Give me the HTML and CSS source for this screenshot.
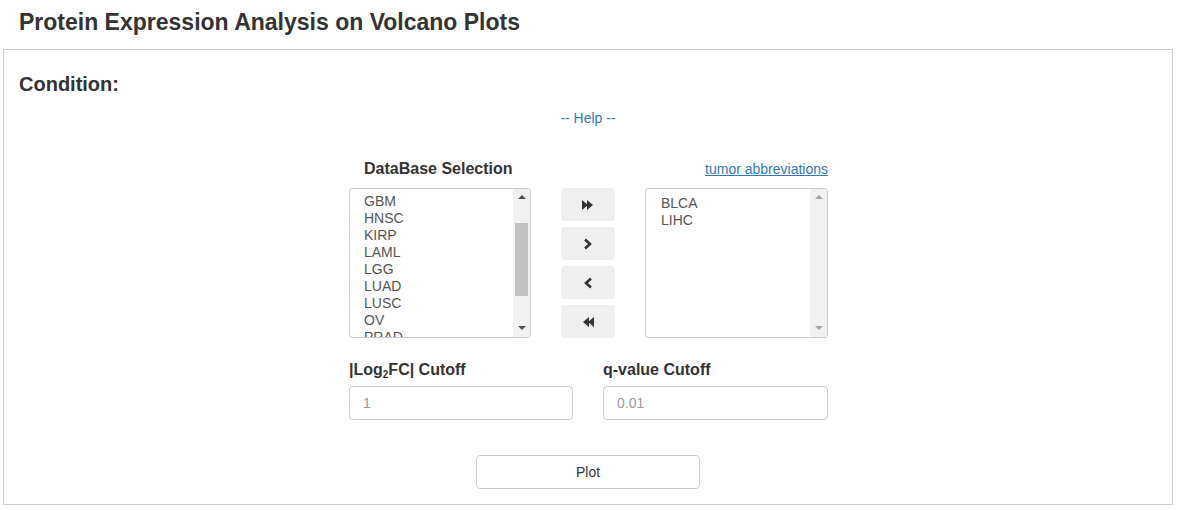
FILE: index.html
```html
<!DOCTYPE html>
<html>
<head>
<meta charset="utf-8">
<link rel="stylesheet" href="styles.css">
</head>
<body>
<h3 class="page-title">Protein Expression Analysis on Volcano Plots</h3>
<div class="panel">
  <h4 class="cond-title">Condition:</h4>
  <div class="help"><a href="#">-- Help --</a></div>
  <div class="block">
    <div class="sel-labels">
      <span class="lbl db-lbl">DataBase Selection</span>
      <a class="abbr" href="#">tumor abbreviations</a>
    </div>
    <div class="sel-row">
      <div class="listbox">
        <div class="items left-items">
          <div>GBM</div><div>HNSC</div><div>KIRP</div><div>LAML</div><div>LGG</div><div>LUAD</div><div>LUSC</div><div>OV</div><div>PRAD</div>
        </div>
        <div class="sbar">
          <span class="arr up"></span>
          <span class="thumb"></span>
          <span class="arr down"></span>
        </div>
      </div>
      <div class="btns">
        <button class="mv"><svg width="12" height="10" viewBox="0 0 12 10"><path d="M0 0L6 5L0 10Z M5 0L11 5L5 10Z" fill="#333"/></svg></button>
        <button class="mv"><svg width="10" height="12" viewBox="0 0 10 12"><path d="M2 1.5L7 6L2 10.5" fill="none" stroke="#333" stroke-width="2.6"/></svg></button>
        <button class="mv"><svg width="10" height="12" viewBox="0 0 10 12"><path d="M8 1.5L3 6L8 10.5" fill="none" stroke="#333" stroke-width="2.6"/></svg></button>
        <button class="mv"><svg width="12" height="10" viewBox="0 0 12 10"><path d="M12 0L6 5L12 10Z M7 0L1 5L7 10Z" fill="#333"/></svg></button>
      </div>
      <div class="listbox right">
        <div class="items right-items">
          <div>BLCA</div><div>LIHC</div>
        </div>
        <div class="sbar off">
          <span class="arr up"></span>
          <span class="arr down"></span>
        </div>
      </div>
    </div>
    <div class="cut-row">
      <div class="cut">
        <div class="lbl">|Log<sub>2</sub>FC| Cutoff</div>
        <input class="inp" placeholder="1">
      </div>
      <div class="cut">
        <div class="lbl">q-value Cutoff</div>
        <input class="inp" placeholder="0.01">
      </div>
    </div>
    <div class="plot-row"><button class="plot">Plot</button></div>
  </div>
</div>
</body>
</html>
```
FILE: styles.css
```css
* { box-sizing: border-box; }
body {
  margin: 0;
  font-family: "Liberation Sans", Arial, sans-serif;
  color: #333;
  background: #fff;
}
.page-title {
  margin: 0;
  padding: 9px 0 0 19px;
  height: 49px;
  font-size: 23px;
  line-height: 26px;
  font-weight: bold;
}
.panel {
  margin-left: 3px;
  width: 1170px;
  height: 456px;
  border: 1px solid #ccc;
  padding: 23px 0 0 15px;
}
.cond-title {
  margin: 0;
  font-size: 20px;
  line-height: 22px;
  font-weight: bold;
}
.help {
  margin-top: 14px;
  text-align: center;
  font-size: 14px;
  line-height: 18px;
  padding-right: 15px;
}
.help a { color: #337ab7; text-decoration: none; }
.block {
  width: 479px;
  margin: 32px 0 0 330px;
}
.sel-labels {
  display: flex;
  justify-content: space-between;
  align-items: center;
  height: 20px;
}
.lbl {
  font-size: 16px;
  font-weight: bold;
  line-height: 20px;
}
.db-lbl { padding-left: 15px; }
.lbl sub { font-size: 10px; line-height: 0; vertical-align: -3px; }
.abbr {
  font-size: 14px;
  color: #337ab7;
  text-decoration: underline;
}
.sel-row {
  display: flex;
  margin-top: 9px;
  gap: 30px;
}
.listbox {
  width: 182px;
  height: 150px;
  border: 1px solid #ccc;
  border-radius: 3px;
  display: flex;
  overflow: hidden;
}
.listbox.right { width: 183px; }
.items {
  flex: 1;
  font-size: 14px;
  line-height: 17px;
  color: #555;
  overflow: hidden;
}
.left-items { padding: 4px 0 0 14px; }
.right-items { padding: 6px 0 0 15px; }
.sbar {
  width: 17px;
  background: #f1f1f1;
  position: relative;
  display: flex;
  flex-direction: column;
  justify-content: space-between;
  align-items: center;
  padding: 6px 0 7px;
}
.thumb {
  position: absolute;
  left: 2px;
  top: 34px;
  width: 13px;
  height: 73px;
  background: #c1c1c1;
}
.arr {
  width: 0;
  height: 0;
  border-left: 4px solid transparent;
  border-right: 4px solid transparent;
}
.arr.up { border-bottom: 4px solid #505050; }
.arr.down { border-top: 4px solid #505050; }
.off .arr.up { border-bottom-color: #a3a3a3; }
.off .arr.down { border-top-color: #a3a3a3; }
.btns {
  display: flex;
  flex-direction: column;
  gap: 6px;
}
.mv {
  width: 54px;
  height: 33px;
  border: none;
  border-radius: 4px;
  background: #efefef;
  display: flex;
  align-items: center;
  justify-content: center;
  padding: 0;
}
.cut-row {
  display: flex;
  gap: 30px;
  margin-top: 22px;
}
.cut { width: 224px; }
.cut + .cut { width: 225px; }
.cut .lbl { height: 20px; }
.inp {
  margin-top: 6px;
  width: 100%;
  height: 34px;
  border: 1px solid #ccc;
  border-radius: 4px;
  padding: 0 13px;
  font-family: inherit;
  font-size: 14px;
  color: #555;
}
.inp::placeholder { color: #999; }
.plot-row {
  margin-top: 35px;
  display: flex;
  justify-content: center;
  padding-right: 1px;
}
.plot {
  width: 224px;
  height: 34px;
  border: 1px solid #ccc;
  border-radius: 4px;
  background: #fff;
  font-family: inherit;
  font-size: 14px;
  color: #333;
}
```
